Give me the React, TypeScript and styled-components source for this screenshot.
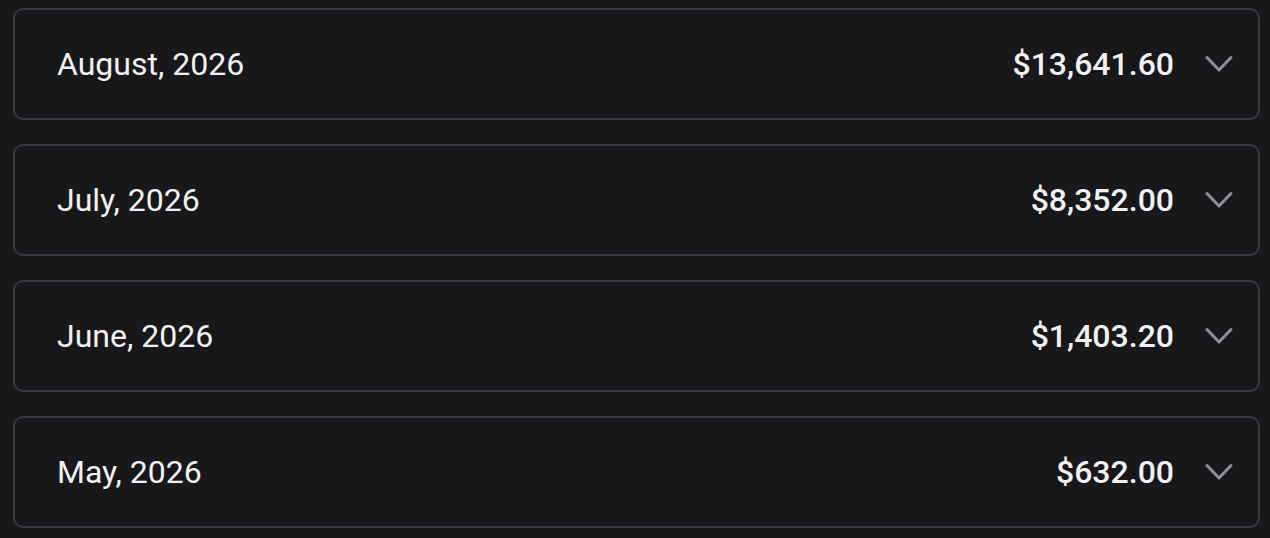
import React from 'react';
import styled, { createGlobalStyle } from 'styled-components';

const GlobalStyle = createGlobalStyle`
  html, body {
    margin: 0;
    padding: 0;
    background: #18181a;
  }
  body {
    font-family: Roboto, "Noto Sans", sans-serif;
  }
`;

const List = styled.div`
  display: flex;
  flex-direction: column;
  gap: 24px;
  padding: 8px 10px 10px 13px;
`;

const MonthCard = styled.div`
  display: flex;
  align-items: center;
  height: 112px;
  box-sizing: border-box;
  padding: 0 25px 0 42px;
  border: 2px solid #37393e;
  border-radius: 10px;
  background: #18181a;
  cursor: pointer;
`;

const MonthLabel = styled.span`
  flex: 1;
  font-size: 32px;
  font-weight: 400;
  color: #f1f1f3;
`;

const Amount = styled.span`
  font-size: 32px;
  font-weight: 500;
  color: #f1f1f3;
`;

const Chevron = styled.svg`
  width: 28px;
  height: 18px;
  margin-left: 31px;
  color: #8a909a;
`;

const months = [
  { label: 'August, 2026', total: '$13,641.60' },
  { label: 'July, 2026', total: '$8,352.00' },
  { label: 'June, 2026', total: '$1,403.20' },
  { label: 'May, 2026', total: '$632.00' },
];

export default function App() {
  return (
    <>
      <GlobalStyle />
      <List>
        {months.map((m) => (
          <MonthCard key={m.label}>
            <MonthLabel>{m.label}</MonthLabel>
            <Amount>{m.total}</Amount>
            <Chevron viewBox="0 0 28 18" fill="none">
              <path d="M2 2.5 L14 15 L26 2.5" stroke="currentColor" strokeWidth="3" strokeLinecap="round" strokeLinejoin="round" />
            </Chevron>
          </MonthCard>
        ))}
      </List>
    </>
  );
}
